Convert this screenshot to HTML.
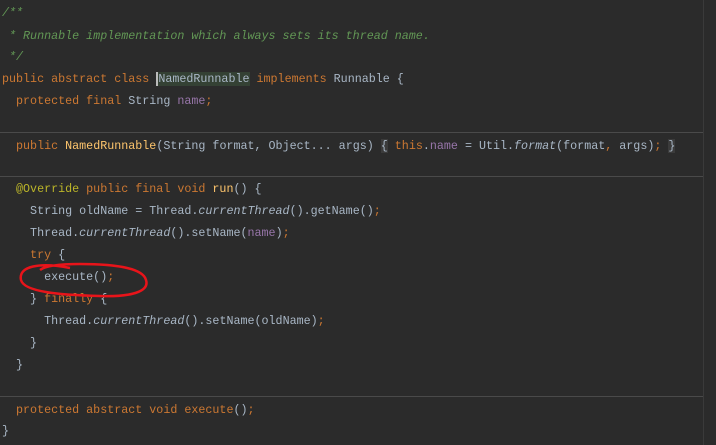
<!DOCTYPE html><html><head><style>
body{margin:0;width:716px;height:445px;background:#2b2b2b;overflow:hidden;position:relative;font-family:"Liberation Mono",monospace;font-size:11.7px;color:#a9b7c6}
.l{position:absolute;left:2px;white-space:pre;line-height:14px}
.k{color:#cc7832}.c{color:#629755;font-style:italic}.n{color:#9876aa}.f{color:#ffc66d}.i{font-style:italic}.a{color:#bbb529}.g{color:#808080}
.sep{position:absolute;left:0;width:703px;height:1px;background:#4a4a4a}
.rm{position:absolute;left:703px;top:0;width:1px;height:445px;background:#3a3a3a}
.hl{background:#344134}
.br{background:#3b3b3b}
</style></head><body>
<div class="rm"></div>
<div class="sep" style="top:132px"></div>
<div class="sep" style="top:176px"></div>
<div class="sep" style="top:396px"></div>
<div class="l c" style="top:6px">/**</div>
<div class="l c" style="top:29px"> * Runnable implementation which always sets its thread name.</div>
<div class="l c" style="top:50px"> */</div>
<div class="l" style="top:72px"><span class="k">public abstract class </span><span class="hl" style="border-left:2px solid #bbb">NamedRunnable</span> <span class="k">implements</span> Runnable {</div>
<div class="l" style="top:94px">  <span class="k">protected final</span> String <span class="n">name</span><span class="k">;</span></div>
<div class="l" style="top:139px">  <span class="k">public</span> <span class="f">NamedRunnable</span>(String format, Object... args) <span class="br">{</span> <span class="k">this</span>.<span class="n">name</span> = Util.<span class="i">format</span>(format<span class="k">,</span> args)<span class="k">;</span> <span class="br">}</span></div>
<div class="l" style="top:182px">  <span class="a">@Override</span> <span class="k">public final void</span> <span class="f">run</span>() {</div>
<div class="l" style="top:204px">    String oldName = Thread.<span class="i">currentThread</span>().getName()<span class="k">;</span></div>
<div class="l" style="top:226px">    Thread.<span class="i">currentThread</span>().setName(<span class="n">name</span>)<span class="k">;</span></div>
<div class="l" style="top:248px">    <span class="k">try</span> {</div>
<div class="l" style="top:270px">      execute()<span class="k">;</span></div>
<div class="l" style="top:292px">    } <span class="k">finally</span> {</div>
<div class="l" style="top:314px">      Thread.<span class="i">currentThread</span>().setName(oldName)<span class="k">;</span></div>
<div class="l" style="top:336px">    }</div>
<div class="l" style="top:358px">  }</div>
<div class="l" style="top:403px">  <span class="k">protected abstract void execute</span>()<span class="k">;</span></div>
<div class="l" style="top:424px">}</div>
<svg style="position:absolute;left:0;top:0" width="716" height="445"><path d="M70 268 C40 262 18 266 21 280 C24 292 60 295 100 296 C130 297 150 292 146 280 C143 268 115 264 80 264 C60 264 45 266 40 270" fill="none" stroke="#e8141a" stroke-width="2.5"/></svg>
</body></html>
